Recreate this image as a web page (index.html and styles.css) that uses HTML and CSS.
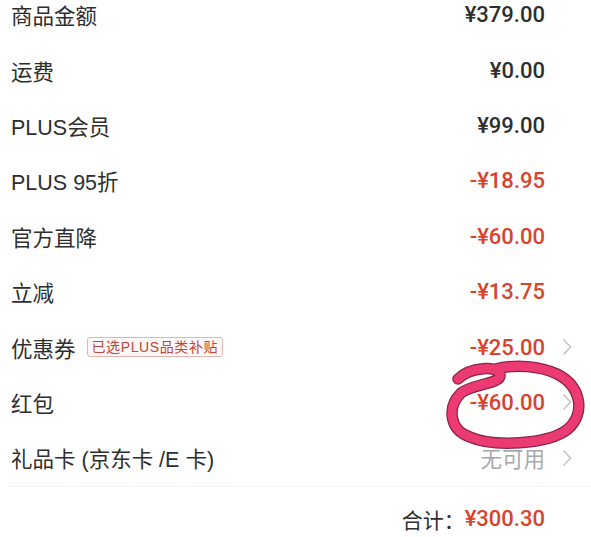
FILE: index.html
```html
<!DOCTYPE html>
<html lang="zh-CN">
<head>
    <meta charset="UTF-8">
    <meta name="viewport" content="width=device-width, initial-scale=1.0">
    <title>订单金额</title>
    <link rel="stylesheet" href="styles.css">
</head>
<body>
    <div class="summary">
        <div class="row">
            <span class="label">商品金额</span>
            <span class="value">¥379.00</span>
            <span class="arrow"></span>
        </div>
        <div class="row">
            <span class="label">运费</span>
            <span class="value">¥0.00</span>
            <span class="arrow"></span>
        </div>
        <div class="row">
            <span class="label">PLUS会员</span>
            <span class="value">¥99.00</span>
            <span class="arrow"></span>
        </div>
        <div class="row">
            <span class="label">PLUS 95折</span>
            <span class="value red">-¥18.95</span>
            <span class="arrow"></span>
        </div>
        <div class="row">
            <span class="label">官方直降</span>
            <span class="value red">-¥60.00</span>
            <span class="arrow"></span>
        </div>
        <div class="row">
            <span class="label">立减</span>
            <span class="value red">-¥13.75</span>
            <span class="arrow"></span>
        </div>
        <div class="row">
            <span class="label">优惠券 <span class="tag">已选PLUS品类补贴</span></span>
            <span class="value red">-¥25.00</span>
            <span class="arrow"><svg width="10" height="18" viewBox="0 0 10 18"><path d="M1.5 1.5 L8.5 9 L1.5 16.5"/></svg></span>
        </div>
        <div class="row">
            <span class="label">红包</span>
            <span class="value red">-¥60.00</span>
            <span class="arrow"><svg width="10" height="18" viewBox="0 0 10 18"><path d="M1.5 1.5 L8.5 9 L1.5 16.5"/></svg></span>
        </div>
        <div class="row last">
            <span class="label">礼品卡 (京东卡 /E 卡)</span>
            <span class="value muted">无可用</span>
            <span class="arrow"><svg width="10" height="18" viewBox="0 0 10 18"><path d="M1.5 1.5 L8.5 9 L1.5 16.5"/></svg></span>
        </div>
        <div class="total">
            合计：<span class="amount red">¥300.30</span>
        </div>
    </div>

    <!-- hand drawn mark over the red packet amount -->
    <svg class="scribble" width="591" height="537" viewBox="0 0 591 537">
        <path class="ink-edge" d="M458 379 C470 367 499 365 500 375 C501 384 472 384 461 393 C447 407 449 430 470 437 C492 447 548 445 568 429 C586 413 581 386 557 374 C540 366 516 364 495 369"/>
        <path class="ink" d="M458 379 C470 367 499 365 500 375 C501 384 472 384 461 393 C447 407 449 430 470 437 C492 447 548 445 568 429 C586 413 581 386 557 374 C540 366 516 364 495 369"/>
    </svg>
</body>
</html>
```

FILE: styles.css
```css
body {
    margin: 0;
    background: #fff;
    font-family: "Liberation Sans", "Noto Sans CJK SC", sans-serif;
    color: #2e2e2e;
    overflow: hidden;
}
.summary {
    margin-top: -13px;
}
.row {
    display: grid;
    grid-template-columns: 1fr auto 27px;
    align-items: center;
    height: 55.4px;
    padding: 0 19px 0 11px;
    font-size: 21.5px;
}
.row.last {
    border-bottom: 1px solid #f2f2f2;
    margin-left: 8px;
    padding-left: 3px;
}
.label {
    display: flex;
    align-items: center;
    gap: 11px;
}
.tag {
    font-size: 14px;
    color: #b9473e;
    border: 1px solid #e4b6ae;
    border-radius: 3px;
    padding: 0 4px;
    line-height: 18px;
    letter-spacing: 0.6px;
    background: #fdf8f7;
}
.value {
    text-align: right;
    font-family: Roboto, "Noto Sans CJK SC", sans-serif;
    font-weight: 500;
    font-size: 22px;
}
.red {
    color: #d8432d;
}
.value.muted {
    color: #a8a8a8;
    font-family: "Liberation Sans", "Noto Sans CJK SC", sans-serif;
    font-weight: 400;
    font-size: 21.5px;
}
.arrow {
    display: flex;
    justify-content: flex-end;
    align-items: center;
}
.arrow path {
    fill: none;
    stroke: #c4c4c4;
    stroke-width: 1.6;
}
.total {
    display: flex;
    justify-content: flex-end;
    align-items: center;
    height: 64px;
    padding-right: 46px;
    font-size: 21px;
}
.amount {
    font-family: Roboto, "Noto Sans CJK SC", sans-serif;
    font-weight: 500;
    font-size: 22px;
}
.scribble {
    position: absolute;
    left: 0;
    top: 0;
    pointer-events: none;
}
.ink-edge {
    fill: none;
    stroke: #8c2447;
    stroke-width: 11.5;
    stroke-linecap: round;
}
.ink {
    fill: none;
    stroke: #ec3a73;
    stroke-width: 9;
    stroke-linecap: round;
}
```
